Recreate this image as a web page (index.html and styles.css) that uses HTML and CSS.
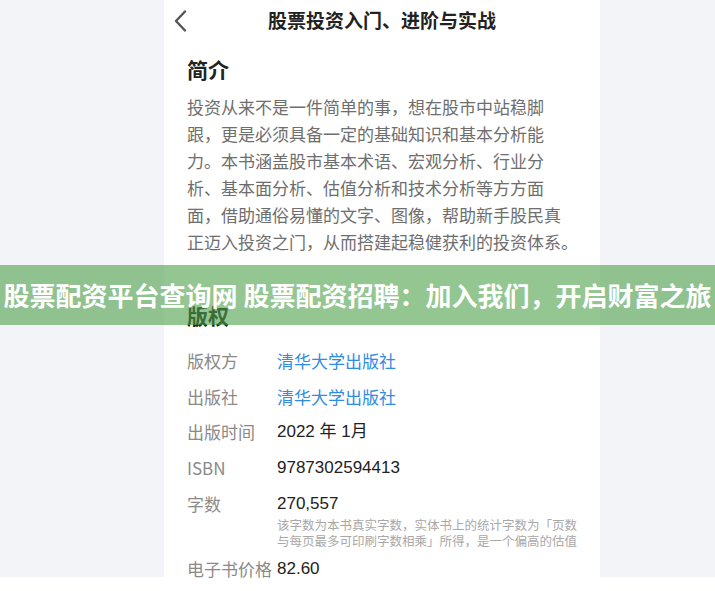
FILE: index.html
```html
<!DOCTYPE html>
<html lang="zh-CN">
<head>
<meta charset="utf-8">
<title>股票投资入门、进阶与实战</title>
<link rel="stylesheet" href="styles.css">
</head>
<body>
<div class="stage">
  <div class="phone">
    <div class="header">
      <div class="back">
        <svg width="14" height="22" viewBox="0 0 14 22"><path d="M12 1.5 L3 11 L12 20.5" fill="none" stroke="#555" stroke-width="2.4" stroke-linecap="round" stroke-linejoin="round"/></svg>
      </div>
      <div class="title">股票投资入门、进阶与实战</div>
      <div></div>
    </div>

    <h2 class="sec-h intro-h">简介</h2>
    <p class="intro">投资从来不是一件简单的事，想在股市中站稳脚<br>跟，更是必须具备一定的基础知识和基本分析能<br>力。本书涵盖股市基本术语、宏观分析、行业分<br>析、基本面分析、估值分析和技术分析等方方面<br>面，借助通俗易懂的文字、图像，帮助新手股民真<br>正迈入投资之门，从而搭建起稳健获利的投资体系。</p>

    <h2 class="sec-h copy-h">版权</h2>
    <div class="info">
      <div class="row"><div class="label">版权方</div><div class="value link">清华大学出版社</div></div>
      <div class="row"><div class="label">出版社</div><div class="value link">清华大学出版社</div></div>
      <div class="row"><div class="label">出版时间</div><div class="value">2022 年 1月</div></div>
      <div class="row"><div class="label">ISBN</div><div class="value">9787302594413</div></div>
      <div class="row"><div class="label">字数</div><div class="value">270,557</div></div>
      <div class="note">该字数为本书真实字数，实体书上的统计字数为「页数<br>与每页最多可印刷字数相乘」所得，是一个偏高的估值</div>
      <div class="row last"><div class="label">电子书价格</div><div class="value">82.60</div></div>
    </div>
  </div>
</div>
<div class="banner">股票配资平台查询网 股票配资招聘：加入我们，开启财富之旅</div>
</body>
</html>
```

FILE: styles.css
```css
* { box-sizing: border-box; }
html, body { margin: 0; padding: 0; }
body {
  background: #ffffff;
  font-family: "Noto Sans CJK SC", "Noto Sans", sans-serif;
  color: #222;
  width: 715px;
  height: 591px;
  overflow: hidden;
  position: relative;
}
.stage {
  height: 577px;
  background: #f3f4f8;
  padding-left: 164px;
}
.phone {
  width: 436px;
  height: 577px;
  background: #fff;
}
.header {
  height: 40px;
  display: grid;
  grid-template-columns: 1fr auto 1fr;
  align-items: center;
}
.back {
  padding-left: 9px;
  padding-top: 1px;
  display: flex;
  align-items: center;
}
.title {
  font-size: 19px;
  font-weight: 700;
  line-height: 26px;
  color: #222;
}
.sec-h {
  margin: 0;
  padding-left: 23px;
  font-size: 21px;
  line-height: 28px;
  font-weight: 700;
  color: #222;
}
.intro-h { margin-top: 15px; }
.intro {
  margin: 10px 0 0;
  padding-left: 23px;
  font-size: 17px;
  line-height: 27px;
  color: #6e6e6e;
  white-space: nowrap;
}
.copy-h { margin-top: 46px; }
.info {
  padding-top: 8px;
  padding-left: 23px;
  font-size: 17px;
  line-height: 24px;
}
.row {
  display: flex;
  margin-top: 11.75px;
}
.row.last { margin-top: 8px; }
.label {
  width: 90px;
  flex: none;
  color: #8a8a8a;
  white-space: nowrap;
}
.value {
  color: #222;
  font-family: "Liberation Sans", "Noto Sans CJK SC", sans-serif;
  white-space: nowrap;
}
.value.link { color: #2f8ce3; font-family: "Noto Sans CJK SC", sans-serif; }
.note {
  margin: 1px 0 0 90px;
  font-size: 12.5px;
  line-height: 16px;
  color: #a8a8a8;
  white-space: nowrap;
}
.banner {
  position: absolute;
  left: 0;
  top: 265px;
  width: 715px;
  height: 60px;
  background: rgba(76, 160, 74, 0.6);
  color: #fff;
  font-size: 26px;
  font-weight: 700;
  line-height: 60px;
  text-align: center;
  white-space: nowrap;
}
```
